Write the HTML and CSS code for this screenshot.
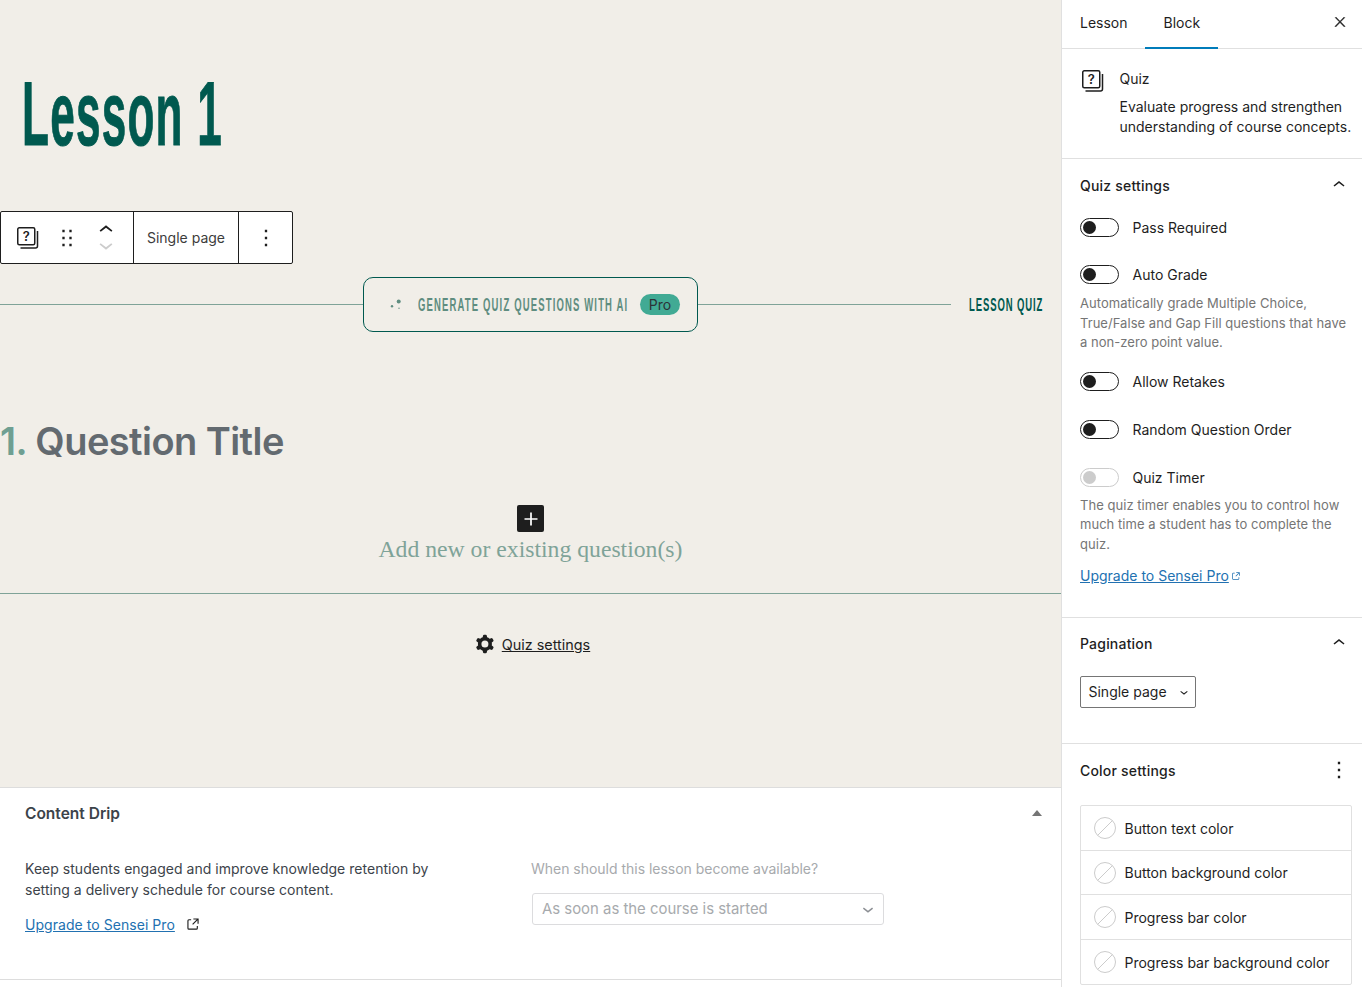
FILE: index.html

```html
<!DOCTYPE html>
<html lang="en">
<head>
    <meta charset="UTF-8">
    <title>Lesson 1</title>
    <link rel="stylesheet" href="styles.css">
</head>
<body>
    <div class="layout">
        <main class="main">
            <div class="editor">
                <h1 class="lesson-title"><span class="narrow">Lesson 1</span></h1>

                <div class="block-toolbar">
                    <div class="tool-group">
                        <svg class="quiz-icon" width="24" height="24" viewBox="0 0 24 24"><rect x="2.75" y="1.75" width="17" height="17" rx="1.5" fill="none" stroke="#1e1e1e" stroke-width="1.5"/><path d="M22.5 5v15a2 2 0 0 1-2 2H5.5" fill="none" stroke="#1e1e1e" stroke-width="1.5"/><text x="11.2" y="15" text-anchor="middle" class="quiz-mark">?</text></svg>
                        <svg class="drag" width="28" height="28" viewBox="0 0 24 24"><path d="M8 7h2V5H8v2zm0 6h2v-2H8v2zm0 6h2v-2H8v2zm6-14v2h2V5h-2zm0 8h2v-2h-2v2zm0 6h2v-2h-2v2z" fill="#1e1e1e"/></svg>
                        <div class="movers">
                            <svg width="28" height="28" viewBox="0 0 24 24"><path d="M6.5 12.4L12 8l5.5 4.4-.9 1.2L12 10l-4.5 3.6-1-1.2z" fill="#1e1e1e"/></svg>
                            <svg width="28" height="28" viewBox="0 0 24 24"><path d="M17.5 11.6L12 16l-5.5-4.4.9-1.2L12 14l4.5-3.6 1 1.2z" fill="#ccc"/></svg>
                        </div>
                    </div>
                    <div class="tool-label">Single page</div>
                    <div class="tool-more">
                        <svg width="28" height="28" viewBox="0 0 24 24"><path d="M13 19h-2v-2h2v2zm0-6h-2v-2h2v2zm0-6h-2V5h2v2z" fill="#1e1e1e"/></svg>
                    </div>
                </div>

                <div class="quiz-head">
                    <div class="rule"></div>
                    <div class="ai-button">
                        <svg width="16" height="16" viewBox="0 0 16 16"><circle cx="9.7" cy="4.5" r="2" fill="#5f8d80"/><circle cx="3" cy="9.2" r="1.2" fill="#5f8d80"/><circle cx="10" cy="11.2" r=".7" fill="#5f8d80"/></svg>
                        <span class="ai-label"><span class="narrow ai-text">GENERATE QUIZ QUESTIONS WITH AI</span></span>
                        <span class="pro-badge">Pro</span>
                    </div>
                    <div class="rule rule-right"></div>
                    <div class="quiz-tag"><span class="narrow tag-text">LESSON QUIZ</span></div>
                </div>

                <h2 class="question-title"><span class="question-num">1.</span> Question Title</h2>

                <div class="add-question">
                    <div class="plus-button">
                        <svg width="26" height="26" viewBox="0 0 24 24"><path d="M18 11.2h-5.2V6h-1.6v5.2H6v1.6h5.2V18h1.6v-5.2H18z" fill="#fff"/></svg>
                    </div>
                    <div class="add-text">Add new or existing question(s)</div>
                </div>

                <div class="quiz-settings-link">
                    <svg width="28" height="28" viewBox="0 0 24 24"><path fill-rule="evenodd" clip-rule="evenodd" d="M10.289 4.836A1 1 0 0111.275 4h1.306a1 1 0 01.987.836l.244 1.466c.787.26 1.503.679 2.108 1.218l1.393-.522a1 1 0 011.216.437l.653 1.13a1 1 0 01-.23 1.273l-1.148.944a6.025 6.025 0 010 2.435l1.149.946a1 1 0 01.23 1.272l-.653 1.13a1 1 0 01-1.216.437l-1.394-.522c-.605.54-1.32.958-2.108 1.218l-.244 1.466a1 1 0 01-.987.836h-1.306a1 1 0 01-.986-.836l-.244-1.466a5.995 5.995 0 01-2.108-1.218l-1.394.522a1 1 0 01-1.217-.436l-.653-1.131a1 1 0 01.23-1.272l1.149-.946a6.026 6.026 0 010-2.435l-1.148-.944a1 1 0 01-.23-1.272l.653-1.131a1 1 0 011.217-.437l1.393.522a5.994 5.994 0 012.108-1.218l.244-1.466zM14.929 12a3 3 0 11-6 0 3 3 0 016 0z" fill="#1e1e1e"/></svg>
                    <a class="settings-anchor">Quiz settings</a>
                </div>
            </div>

            <section class="metabox">
                <div class="metabox-head">
                    <h3>Content Drip</h3>
                    <span class="triangle"></span>
                </div>
                <div class="metabox-body">
                    <div class="metabox-left">
                        <p>Keep students engaged and improve knowledge retention by setting a delivery schedule for course content.</p>
                        <div class="upgrade-row">
                            <a class="link">Upgrade to Sensei Pro</a>
                            <svg width="18" height="18" viewBox="0 0 24 24"><path d="M19.5 4.5h-7V6h4.44l-5.97 5.97 1.06 1.06L18 7.06v4.44h1.5v-7Zm-13 1a2 2 0 0 0-2 2v10a2 2 0 0 0 2 2h10a2 2 0 0 0 2-2v-3H17v3a.5.5 0 0 1-.5.5h-10a.5.5 0 0 1-.5-.5v-10a.5.5 0 0 1 .5-.5h3V5.5h-3Z" fill="#1e1e1e"/></svg>
                        </div>
                    </div>
                    <div class="metabox-right">
                        <div class="avail-label">When should this lesson become available?</div>
                        <div class="avail-select">
                            <span>As soon as the course is started</span>
                            <svg width="22" height="22" viewBox="0 0 24 24"><path d="M17.5 11.6L12 16l-5.5-4.4.9-1.2L12 14l4.5-3.6 1 1.2z" fill="#8c8f94"/></svg>
                        </div>
                    </div>
                </div>
            </section>
        </main>

        <aside class="sidebar">
            <div class="tabs">
                <div class="tab">Lesson</div>
                <div class="tab tab-active">Block</div>
                <svg class="tabs-close" width="16" height="16" viewBox="0 0 24 24"><path d="M13 11.8l6.1-6.3-1-1-6.1 6.2-6.1-6.2-1 1 6.1 6.3-6.5 6.7 1 1 6.5-6.6 6.5 6.6 1-1z" fill="#1e1e1e" stroke="#1e1e1e" stroke-width=".7"/></svg>
            </div>

            <div class="block-card">
                <svg class="quiz-icon" width="24" height="24" viewBox="0 0 24 24"><rect x="2.75" y="1.75" width="17" height="17" rx="1.5" fill="none" stroke="#1e1e1e" stroke-width="1.5"/><path d="M22.5 5v15a2 2 0 0 1-2 2H5.5" fill="none" stroke="#1e1e1e" stroke-width="1.5"/><text x="11.2" y="15" text-anchor="middle" class="quiz-mark">?</text></svg>
                <div>
                    <div class="card-title">Quiz</div>
                    <div class="card-desc">Evaluate progress and strengthen understanding of course concepts.</div>
                </div>
            </div>

            <section class="panel panel-quiz">
                <div class="panel-head">
                    <span>Quiz settings</span>
                    <svg width="24" height="24" viewBox="0 0 24 24"><path d="M6.5 12.4L12 8l5.5 4.4-.9 1.2L12 10l-4.5 3.6-1-1.2z" fill="#1e1e1e"/></svg>
                </div>
                <div class="toggle-row toggle-first"><span class="toggle"></span>Pass Required</div>
                <div class="toggle-row"><span class="toggle"></span>Auto Grade</div>
                <p class="help">Automatically grade Multiple Choice, True/False and Gap Fill questions that have a non-zero point value.</p>
                <div class="toggle-row"><span class="toggle"></span>Allow Retakes</div>
                <div class="toggle-row"><span class="toggle"></span>Random Question Order</div>
                <div class="toggle-row"><span class="toggle toggle-off"></span>Quiz Timer</div>
                <p class="help help-timer">The quiz timer enables you to control how much time a student has to complete the quiz.</p>
                <div class="side-upgrade">
                    <a class="link">Upgrade to Sensei Pro</a>
                    <svg width="12" height="12" viewBox="0 0 24 24"><path d="M19.5 4.5h-7V6h4.44l-5.97 5.97 1.06 1.06L18 7.06v4.44h1.5v-7Zm-13 1a2 2 0 0 0-2 2v10a2 2 0 0 0 2 2h10a2 2 0 0 0 2-2v-3H17v3a.5.5 0 0 1-.5.5h-10a.5.5 0 0 1-.5-.5v-10a.5.5 0 0 1 .5-.5h3V5.5h-3Z" fill="#2271b1"/></svg>
                </div>
            </section>

            <section class="panel panel-pagination">
                <div class="panel-head">
                    <span>Pagination</span>
                    <svg width="24" height="24" viewBox="0 0 24 24"><path d="M6.5 12.4L12 8l5.5 4.4-.9 1.2L12 10l-4.5 3.6-1-1.2z" fill="#1e1e1e"/></svg>
                </div>
                <div class="page-select">
                    <span>Single page</span>
                    <svg width="16" height="16" viewBox="0 0 24 24"><path d="M17.5 11.6L12 16l-5.5-4.4.9-1.2L12 14l4.5-3.6 1 1.2z" fill="#1e1e1e"/></svg>
                </div>
            </section>

            <section class="panel panel-color">
                <div class="panel-head">
                    <span>Color settings</span>
                    <svg class="panel-more" width="28" height="28" viewBox="0 0 24 24"><path d="M13 19h-2v-2h2v2zm0-6h-2v-2h2v2zm0-6h-2V5h2v2z" fill="#1e1e1e"/></svg>
                </div>
                <div class="color-list">
                    <div class="color-row"><span class="swatch"></span>Button text color</div>
                    <div class="color-row"><span class="swatch"></span>Button background color</div>
                    <div class="color-row"><span class="swatch"></span>Progress bar color</div>
                    <div class="color-row"><span class="swatch"></span>Progress bar background color</div>
                </div>
            </section>
        </aside>
    </div>
</body>
</html>
```

FILE: styles.css

```css
/* General page */
html, body {
    margin: 0;
    padding: 0;
    height: 987px;
    overflow: hidden;
}

body {
    font-family: Inter, "Liberation Sans", sans-serif;
    font-size: 14px;
    color: #1e1e1e;
    background-color: #fff;
}

.layout {
    display: grid;
    grid-template-columns: 1061px 301px;
    height: 987px;
}

.main {
    display: flex;
    flex-direction: column;
    min-width: 0;
    overflow: hidden;
}

/* Editor canvas */
.editor {
    height: 787px;
    flex: none;
    background-color: #f1eee8;
    overflow: hidden;
}

/* Condensed display type: no narrow face is installed */
.narrow {
    display: inline-block;
    font-family: "Liberation Sans", sans-serif;
    font-weight: 700;
    white-space: nowrap;
    transform-origin: left center;
}

.lesson-title {
    margin: 0;
    padding: 61px 0 0 22px;
    height: 150px;
    box-sizing: border-box;
    color: #00594f;
    font-size: 90px;
    line-height: 104px;
    font-weight: 700;
}

.lesson-title .narrow {
    transform: scaleX(0.49);
    -webkit-text-stroke: 1px #00594f;
    letter-spacing: 2.5px;
}

/* Block toolbar */
.block-toolbar {
    display: flex;
    width: 293px;
    height: 53px;
    margin-top: 61px;
    box-sizing: border-box;
    background-color: #fff;
    border: 1px solid #1e1e1e;
    border-radius: 2px;
}

.tool-group {
    display: flex;
    align-items: center;
    flex: none;
    width: 133px;
    box-sizing: border-box;
    padding-left: 14px;
    border-right: 1px solid #1e1e1e;
}

.quiz-mark {
    font-family: Inter, sans-serif;
    font-size: 13px;
    font-weight: 600;
    fill: #1e1e1e;
}

.drag {
    margin-left: 14px;
}

.movers {
    display: flex;
    flex-direction: column;
    margin-left: 11px;
}

.movers svg {
    display: block;
}

.movers svg + svg {
    margin-top: -13px;
}

.tool-label {
    width: 105px;
    flex: none;
    box-sizing: border-box;
    border-right: 1px solid #1e1e1e;
    text-align: center;
    line-height: 51px;
    color: #3c3c3c;
}

.tool-more {
    flex: 1;
    display: flex;
    align-items: center;
    justify-content: center;
}

/* Quiz header row */
.quiz-head {
    display: flex;
    align-items: center;
    height: 55px;
    margin-top: 13px;
}

.rule {
    flex: none;
    width: 363px;
    height: 1px;
    background-color: #7fa398;
}

.rule-right {
    width: 253px;
}

.ai-button {
    display: flex;
    flex: none;
    align-items: center;
    width: 335px;
    height: 55px;
    box-sizing: border-box;
    padding-left: 25px;
    border: 1px solid #00594f;
    border-radius: 10px;
}

.ai-label {
    flex: none;
    width: 222px;
    margin-left: 13px;
    height: 24px;
    line-height: 24px;
}

.ai-text {
    color: #5f8d80;
    font-size: 19px;
    letter-spacing: 2.3px;
    transform: scaleX(0.5);
}

.pro-badge {
    flex: none;
    width: 40px;
    height: 21px;
    line-height: 21px;
    text-align: center;
    border-radius: 11px;
    background-color: #41aa94;
    color: #2c3338;
}

.quiz-tag {
    flex: 1;
    min-width: 0;
    padding-left: 18px;
    height: 24px;
    line-height: 24px;
}

.tag-text {
    color: #00594f;
    font-size: 19px;
    letter-spacing: 1.8px;
    transform: scaleX(0.5);
}

/* Question */
.question-title {
    margin: 84px 0 0 0;
    font-size: 38px;
    line-height: 50px;
    font-weight: 600;
    letter-spacing: -0.55px;
    color: #636a70;
}

.question-num {
    color: #6f9f92;
}

.add-question {
    margin-top: 39px;
    height: 89px;
    box-sizing: border-box;
    border-bottom: 1px solid #7fa398;
    text-align: center;
}

.plus-button {
    display: flex;
    align-items: center;
    justify-content: center;
    width: 27px;
    height: 27px;
    margin: 0 auto;
    background-color: #1e1e1e;
    border-radius: 2px;
}

.add-text {
    font-family: "Liberation Serif", serif;
    font-size: 23.7px;
    line-height: 34px;
    color: #7fa398;
}

.quiz-settings-link {
    display: flex;
    align-items: center;
    justify-content: center;
    gap: 3px;
    margin-top: 38px;
    height: 24px;
    font-size: 14.4px;
}

.settings-anchor {
    text-decoration: underline;
}

/* Content Drip metabox */
.metabox {
    flex: 1;
    background-color: #fff;
    border-top: 1px solid #ddd;
}

.metabox-head {
    display: flex;
    align-items: center;
    justify-content: space-between;
    height: 50px;
    padding: 0 19px 0 25px;
}

.metabox-head h3 {
    margin: 0;
    font-size: 15.5px;
    font-weight: 600;
    color: #3c434a;
}

.triangle {
    border-left: 5px solid transparent;
    border-right: 5px solid transparent;
    border-bottom: 6px solid #757575;
}

.metabox-body {
    display: flex;
    height: 142px;
    box-sizing: border-box;
    padding: 20px 0 0 25px;
    border-bottom: 1px solid #ddd;
    color: #3c434a;
    font-size: 14px;
}

.metabox-left {
    width: 506px;
    flex: none;
}

.metabox-left p {
    margin: 0;
    width: 420px;
    line-height: 21px;
    letter-spacing: 0.03px;
}

.upgrade-row {
    display: flex;
    align-items: center;
    gap: 9px;
    margin-top: 15px;
    letter-spacing: 0.05px;
}

.link {
    color: #2271b1;
    text-decoration: underline;
}

.avail-label {
    color: #a7aaad;
    line-height: 21px;
    letter-spacing: -0.02px;
}

.avail-select {
    display: flex;
    align-items: center;
    justify-content: space-between;
    width: 352px;
    height: 32px;
    margin: 14px 0 0 1px;
    padding: 0 4px 0 9px;
    box-sizing: border-box;
    border: 1px solid #dcdcde;
    border-radius: 3px;
    color: #a7aaad;
    font-size: 14.9px;
}

/* Sidebar */
.sidebar {
    border-left: 1px solid #e0e0e0;
    overflow: hidden;
}

.tabs {
    display: flex;
    align-items: stretch;
    height: 49px;
    box-sizing: border-box;
    border-bottom: 1px solid #e0e0e0;
}

.tab {
    padding: 0 18px;
    line-height: 46px;
}

.tab-active {
    height: 49px;
    margin-left: -1px;
    padding-left: 19px;
    box-sizing: border-box;
    border-bottom: 2px solid #007cba;
}

.tabs-close {
    margin: 14px 14px 0 auto;
}

.block-card {
    display: flex;
    gap: 15.5px;
    height: 110px;
    box-sizing: border-box;
    padding: 20px 0 0 18px;
    border-bottom: 1px solid #e0e0e0;
}

.block-card .quiz-icon {
    flex: none;
}

.card-title {
    line-height: 20px;
    margin-bottom: 8px;
}

.card-desc {
    line-height: 20px;
    width: 235px;
}

.panel {
    padding: 0 10px 0 18px;
    box-sizing: border-box;
    border-bottom: 1px solid #e0e0e0;
}

.panel-quiz {
    height: 459px;
}

.panel-pagination {
    height: 126px;
}

.panel-pagination .panel-head {
    height: 50px;
}

.panel-color {
    border-bottom: none;
}

.panel-head {
    display: flex;
    align-items: center;
    justify-content: space-between;
    height: 52px;
    font-weight: 500;
    letter-spacing: 0.2px;
}

.panel-head svg {
    margin: 0 1px 1px 0;
}

.panel-head .panel-more {
    margin: 0 -1px 0 0;
}

.toggle-row {
    display: flex;
    align-items: center;
    gap: 13.5px;
    height: 20px;
    margin-bottom: 28px;
}

.toggle-first {
    margin-top: 6px;
    margin-bottom: 27px;
}

.toggle {
    width: 39px;
    height: 19px;
    box-sizing: border-box;
    border: 1px solid #1e1e1e;
    border-radius: 10px;
    background-color: #fff;
    position: relative;
}

.toggle::after {
    content: "";
    position: absolute;
    left: 2px;
    top: 2px;
    width: 13px;
    height: 13px;
    border-radius: 50%;
    background-color: #1e1e1e;
}

.toggle-off {
    border-color: #ccc;
}

.toggle-off::after {
    background-color: #ccc;
}

.help {
    margin: -18px 0 19px 0;
    font-size: 13px;
    line-height: 19.5px;
    letter-spacing: 0.04px;
    color: #757575;
}

.help-timer {
    margin-top: -20px;
}

.side-upgrade {
    display: flex;
    align-items: center;
    gap: 1px;
    margin-top: -6px;
}

.page-select {
    display: flex;
    align-items: center;
    justify-content: space-between;
    width: 116px;
    height: 32px;
    margin-top: 8px;
    padding: 0 3px 1px 7.5px;
    box-sizing: border-box;
    border: 1px solid #757575;
    border-radius: 2px;
}

.color-list {
    margin-top: 9px;
    width: 272px;
    box-sizing: border-box;
    border: 1px solid #e0e0e0;
    border-radius: 2px;
}

.color-row {
    display: flex;
    align-items: center;
    gap: 8.5px;
    height: 44.5px;
    box-sizing: border-box;
    padding: 1px 0 0 13px;
    border-bottom: 1px solid #e0e0e0;
}

.color-row:last-child {
    border-bottom: none;
}

.swatch {
    width: 22px;
    height: 22px;
    box-sizing: border-box;
    border: 1px solid #ccc;
    border-radius: 50%;
    background: linear-gradient(-45deg, transparent 48%, #ccc 48%, #ccc 52%, transparent 52%);
}
```
